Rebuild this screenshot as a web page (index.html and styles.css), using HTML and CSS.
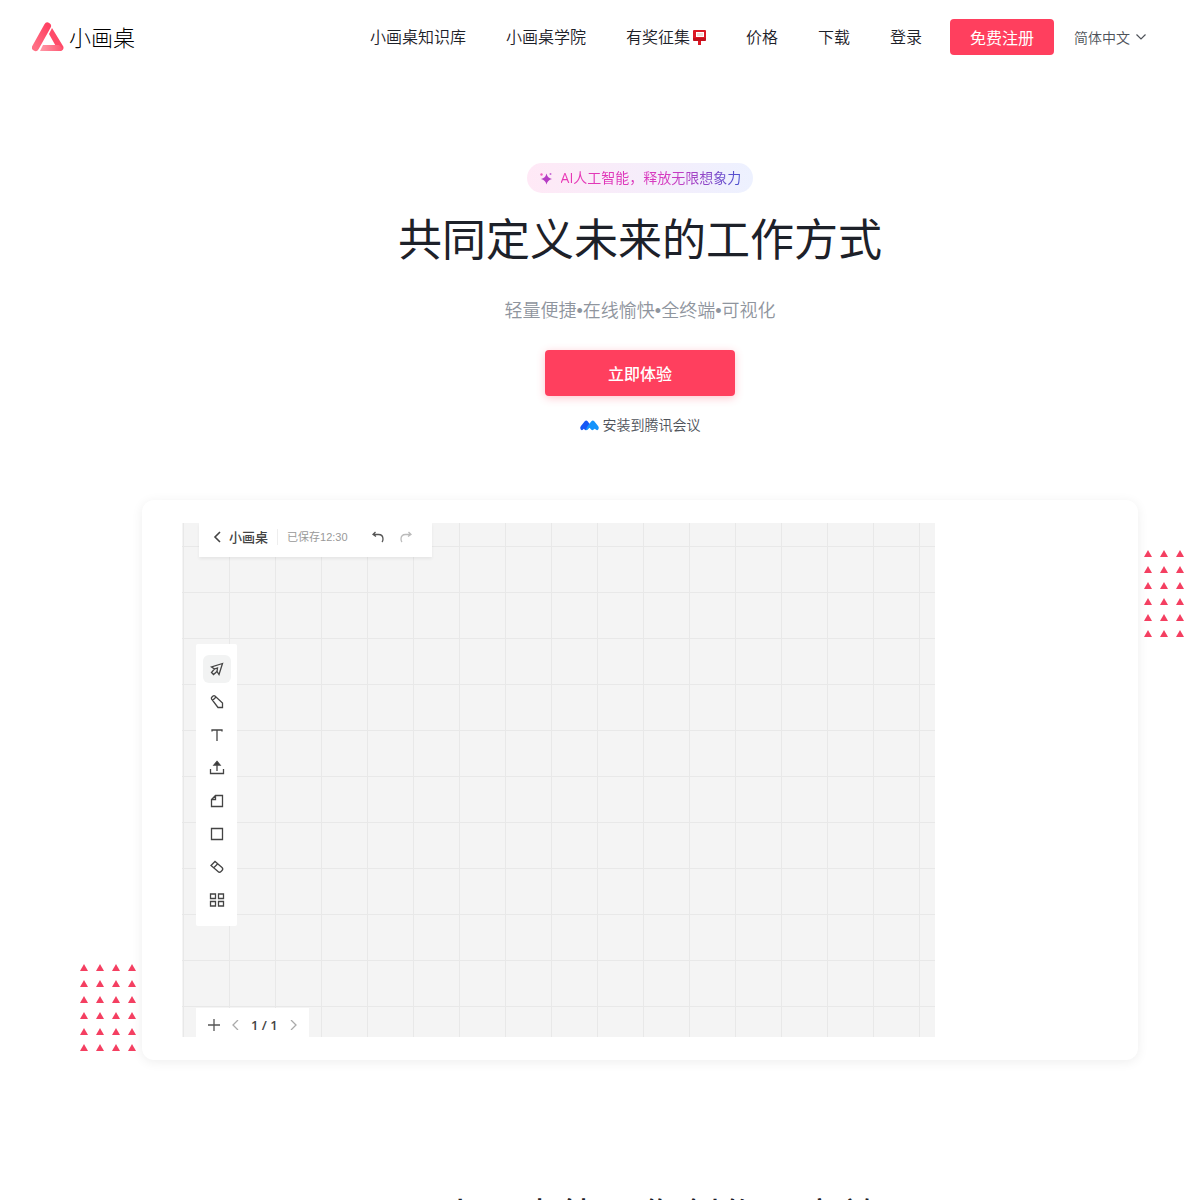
FILE: index.html
```html
<!DOCTYPE html>
<html lang="zh-CN">

<head>
    <meta charset="UTF-8">
    <meta name="viewport" content="width=device-width, initial-scale=1.0">
    <title>小画桌</title>
    <link rel="stylesheet" href="styles.css">
</head>

<body>
    <header class="header">
        <a class="logo" href="#">
            <svg width="32" height="30" viewBox="0 0 32 30" aria-hidden="true">
                <defs>
                    <linearGradient id="logo-left" x1="0" y1="1" x2="1" y2="0">
                        <stop offset="0" stop-color="#ff6f84"/>
                        <stop offset="1" stop-color="#ff4263"/>
                    </linearGradient>
                    <linearGradient id="logo-bottom" x1="0" y1="0" x2="1" y2="0">
                        <stop offset="0" stop-color="#ff9aa8"/>
                        <stop offset="1" stop-color="#ff5873"/>
                    </linearGradient>
                </defs>
                <path d="M20 6l11 18c2 3-2 7-5 4L17 12z" fill="#ff4b69"/>
                <path d="M11 23h16l3 3a3 3 0 0 1-3 3H8z" fill="url(#logo-bottom)"/>
                <path d="M3.500 25.500L15.500 4" stroke="url(#logo-left)" stroke-width="7" stroke-linecap="round"/>
            </svg>
            <span>小画桌</span>
        </a>
        <nav class="nav">
            <a href="#">小画桌知识库</a>
            <a href="#">小画桌学院</a>
            <a href="#" class="nav-prize">有奖征集
                <svg width="13" height="16" viewBox="0 0 13 16" aria-hidden="true">
                    <path d="M1 1h11q1 0 1 1v8q0 2-1 2H8v4H5v-4H1q-1 0-1-2V2q0-1 1-1z" fill="#dc1825"/>
                    <path d="M0 9h13v1q0 2-1 2H1q-1 0-1-2z" fill="#c2101d"/>
                    <path d="M3 3h8v5H3z" fill="#fff"/>
                    <path d="M4 4h6v3H4z" fill="#f3dcd8"/>
                </svg>
            </a>
            <a href="#">价格</a>
            <a href="#">下载</a>
            <a href="#">登录</a>
        </nav>
        <button class="btn register" type="button">免费注册</button>
        <button class="lang" type="button">简体中文
            <svg width="10" height="6" viewBox="0 0 10 6" aria-hidden="true">
                <path d="M.5.5L5 5 9.500.5" fill="none" stroke="currentColor" stroke-width="1.200"/>
            </svg>
        </button>
    </header>

    <main class="main">
        <section class="hero">
            <a class="ai-tag" href="#">
                <svg width="14" height="14" viewBox="0 0 14 14" aria-hidden="true">
                    <path d="M7.500 2.500Q8.500 7 13 8 8.500 9 7.500 13.500 6.500 9 2 8 6.500 7 7.500 2.500z" fill="#b63dc4"/>
                    <circle cx="2.500" cy="3.500" r="1.200" fill="#ef5fc0"/>
                    <circle cx="11.500" cy="3" r="1" fill="#c66ad6"/>
                </svg>
                <span>AI人工智能，释放无限想象力</span>
            </a>
            <h1>共同定义未来的工作方式</h1>
            <p class="subtitle">轻量便捷•在线愉快•全终端•可视化</p>
            <button class="btn start" type="button">立即体验</button>
            <a class="meeting" href="#">
                <svg width="19" height="12" viewBox="0 0 20 12" aria-hidden="true">
                    <path d="M1 7l4-5q1.500-1.500 3 0l3 4-4 5q-1 1-2 0l-1-1-1 1q-1 1-2 0-1.500-2 0-4z" fill="#1657f5"/>
                    <path d="M8 7l4-5q1.500-1.500 3 0l4 5q1.500 2 0 4-1 1-2 0l-1.500-1-1.500 1q-1 1-2 0l-2-2-2 2q-1 1-2 0z" fill="#1593fb"/>
                </svg>
                <span>安装到腾讯会议</span>
            </a>
        </section>

        <section class="showcase">
            <svg class="dots dots-right" width="56" height="96" aria-hidden="true">
                <defs>
                    <pattern id="triangles" width="16" height="16" patternUnits="userSpaceOnUse">
                        <path d="M4 0l4 7H0z" fill="#f43f61"/>
                    </pattern>
                </defs>
                <rect width="56" height="96" fill="url(#triangles)"/>
            </svg>
            <svg class="dots dots-left" width="72" height="96" aria-hidden="true">
                <rect width="72" height="96" fill="url(#triangles)"/>
            </svg>

            <div class="card">
                <div class="board">
                    <div class="board-top">
                        <svg width="8" height="12" viewBox="0 0 8 12" aria-hidden="true">
                            <path d="M7 1L2 6l5 5" fill="none" stroke="#444" stroke-width="1.600"/>
                        </svg>
                        <strong>小画桌</strong>
                        <span class="saved">已保存12:30</span>
                        <svg class="undo" width="12" height="12" viewBox="0 0 12 12" aria-hidden="true">
                            <path d="M3.500 1L1 3.500 4 5.500M1 3.500h5.500q4.500 0 4.500 4.500 0 2-1 3" fill="none" stroke="#555" stroke-width="1.300"/>
                        </svg>
                        <svg width="12" height="12" viewBox="0 0 12 12" aria-hidden="true">
                            <path d="M8.500 1L11 3.500 8 5.500M11 3.500H5.500Q1 3.500 1 8q0 2 1 3" fill="none" stroke="#bbb" stroke-width="1.300"/>
                        </svg>
                    </div>

                    <div class="tools">
                        <button class="active" type="button" aria-label="选择">
                            <svg viewBox="0 0 16 16"><path d="M13.500 2.500L2.500 6l3 2L2.500 11.500l2 2L8 10.500l2 3z"/><path d="M5.500 8l3-1-.5 3.500"/></svg>
                        </button>
                        <button type="button" aria-label="画笔">
                            <svg viewBox="0 0 16 16"><path d="M2.500 5q-.5-1 .5-2l1-1q1-.5 2 0l7.500 7v4.500H9zM3.500 6.500L7 3"/></svg>
                        </button>
                        <button type="button" aria-label="文本">
                            <svg viewBox="0 0 16 16"><path d="M3 4.500V3h10v1.500M8 3v11"/></svg>
                        </button>
                        <button type="button" aria-label="上传">
                            <svg viewBox="0 0 16 16"><path d="M1.500 9v4.500h13V9M8 11V3"/><path d="M8 1.500l3 3.500H5z" fill="#333"/></svg>
                        </button>
                        <button type="button" aria-label="便签">
                            <svg viewBox="0 0 16 16"><path d="M6.500 2.500h7v11h-11v-7zM6.500 2.500v4h-4"/></svg>
                        </button>
                        <button type="button" aria-label="图形">
                            <svg viewBox="0 0 16 16"><path d="M2.500 2.500h11v11h-11z"/></svg>
                        </button>
                        <button type="button" aria-label="橡皮">
                            <svg viewBox="0 0 16 16"><path d="M2 6.500L6 2.500l7 6q1.500 1.500 0 3l-1 1q-1.500 1.500-3 0zM4.500 9l4-4"/></svg>
                        </button>
                        <button type="button" aria-label="更多">
                            <svg viewBox="0 0 16 16"><path d="M1.500 2h5v4.500h-5zM9.500 2h5v4.500h-5zM1.500 9.500h5V14h-5zM9.500 9.500h5V14h-5z"/></svg>
                        </button>
                    </div>

                    <div class="pages">
                        <svg width="12" height="12" viewBox="0 0 12 12" aria-hidden="true">
                            <path d="M6 0v12M0 6h12" stroke="#555" stroke-width="1.300"/>
                        </svg>
                        <svg width="7" height="10" viewBox="0 0 7 10" aria-hidden="true">
                            <path d="M6 0L1 5l5 5" fill="none" stroke="#aaa" stroke-width="1.300"/>
                        </svg>
                        <span>1 / 1</span>
                        <svg width="7" height="10" viewBox="0 0 7 10" aria-hidden="true">
                            <path d="M1 0l5 5-5 5" fill="none" stroke="#aaa" stroke-width="1.300"/>
                        </svg>
                    </div>
                </div>
            </div>
        </section>

        <section class="features">
            <h2>用小画桌能同你创作更高效</h2>
        </section>
    </main>
</body>

</html>
```

FILE: styles.css
```css
* {
    box-sizing: border-box;
}

body {
    margin: 0;
    background: #fff;
    color: #1d2129;
    font-family: "Open Sans", "Noto Sans CJK SC", sans-serif;
    font-size: 16px;
    font-weight: 350;
    line-height: 24px;
}

a {
    color: inherit;
    text-decoration: none;
}

button {
    border: none;
    padding: 0;
    font-family: inherit;
    cursor: pointer;
}

svg {
    display: block;
    flex-shrink: 0;
}

/* header */
.header {
    display: flex;
    align-items: center;
    height: 74px;
    padding: 0 54px 0 32px;
}

.logo {
    display: flex;
    align-items: center;
    gap: 5px;
    margin-right: auto;
    color: #000;
    font-size: 22px;
    font-weight: 300;
    line-height: 30px;
}

.nav {
    display: flex;
    gap: 40px;
    margin-right: 28px;
}

.nav-prize {
    display: flex;
    align-items: center;
    gap: 3px;
}

.btn {
    background: #ff3f5e;
    color: #fff;
    font-size: 16px;
    border-radius: 4px;
}

.register {
    width: 104px;
    height: 36px;
    margin-right: 20px;
    font-weight: 400;
}

.lang {
    display: flex;
    align-items: center;
    gap: 6px;
    background: none;
    color: #4e5259;
    font-size: 14px;
    font-weight: 350;
}

/* hero */
.main {
    min-width: 1280px;
    padding-top: 89px;
}

.hero {
    display: flex;
    flex-direction: column;
    align-items: center;
}

.ai-tag {
    display: flex;
    align-items: center;
    gap: 8px;
    height: 30px;
    padding: 0 12px;
    border-radius: 15px;
    background: linear-gradient(90deg, #ffe9f6, #edf1ff);
    font-size: 14px;
    font-weight: 400;
}

.ai-tag span {
    background: linear-gradient(90deg, #e935b4 0%, #d43bc0 60%, #4a52d0 100%);
    -webkit-background-clip: text;
    background-clip: text;
    color: transparent;
}

.hero h1 {
    margin: 13px 0 0;
    font-size: 44px;
    font-weight: 400;
    line-height: 66px;
}

.subtitle {
    margin: 26px 0 0;
    color: #8f959e;
    font-family: "Liberation Sans", "Noto Sans CJK SC", sans-serif;
    font-size: 18px;
    line-height: 26px;
}

.start {
    width: 190px;
    height: 46px;
    margin-top: 26px;
    font-weight: 500;
    box-shadow: 0 2px 8px rgba(255, 63, 94, 0.3);
}

.meeting {
    display: flex;
    align-items: center;
    gap: 4px;
    margin-top: 17px;
    color: #4e5259;
    font-size: 14px;
}

/* whiteboard preview */
.showcase {
    position: relative;
    width: 996px;
    margin: 63px auto 0;
}

.dots {
    position: absolute;
}

.dots-right {
    top: 50px;
    right: -46px;
}

.dots-left {
    bottom: 0;
    left: -62px;
}

.card {
    position: relative;
    padding: 23px 40px;
    background: #fff;
    border-radius: 12px;
    box-shadow: 0 2px 12px rgba(0, 0, 0, 0.07);
}

.board {
    display: flex;
    flex-direction: column;
    align-items: flex-start;
    width: 753px;
    height: 514px;
    padding-left: 14px;
    background-color: #f4f4f4;
    background-image: linear-gradient(#e8e8e8 1px, transparent 1px), linear-gradient(90deg, #e8e8e8 1px, transparent 1px);
    background-size: 46px 46px;
    background-position: 1px 23px;
    color: #444;
}

.board-top,
.tools,
.pages {
    display: flex;
    align-items: center;
    background: #fff;
}

.board-top {
    width: 233px;
    height: 34px;
    margin-left: 3px;
    padding: 0 14px 6px;
    font-size: 13px;
    box-shadow: 0 2px 3px rgba(0, 0, 0, 0.06);
}

.board-top strong {
    margin-left: 8px;
    font-weight: 500;
}

.saved {
    margin: 0 24px 0 9px;
    padding-left: 9px;
    border-left: 1px solid #eee;
    color: #999;
    font-family: "Liberation Sans", "Noto Sans CJK SC", sans-serif;
    font-size: 11px;
    font-weight: 400;
    line-height: 16px;
}

.undo {
    margin-right: 16px;
}

.tools {
    flex-direction: column;
    gap: 5px;
    width: 41px;
    height: 282px;
    margin-top: 87px;
    padding-top: 11px;
    border-radius: 2px;
}

.tools button {
    display: flex;
    align-items: center;
    justify-content: center;
    width: 28px;
    height: 28px;
    border-radius: 6px;
    background: none;
}

.tools .active {
    background: #f2f3f3;
}

.tools svg {
    width: 16px;
    height: 16px;
    fill: none;
    stroke: #444;
    stroke-width: 1.3;
}

.pages {
    gap: 12px;
    height: 29px;
    margin-top: auto;
    padding: 5px 12px 0;
    font-size: 13px;
    font-weight: 600;
}

/* features */
.features {
    margin-top: 127px;
    padding-bottom: 80px;
    text-align: center;
}

.features h2 {
    margin: 0;
    font-size: 40px;
    font-weight: 400;
    line-height: 60px;
}
```
